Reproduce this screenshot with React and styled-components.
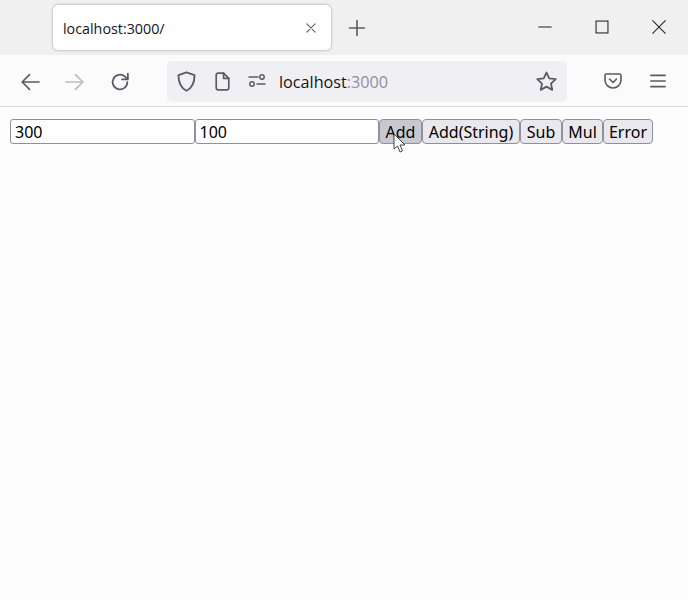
import React from 'react';
import styled, { createGlobalStyle } from 'styled-components';

const GlobalStyle = createGlobalStyle`
  html, body {
    margin: 0;
    padding: 0;
    height: 100%;
    background: #fdfdfd;
    overflow: hidden;
  }
  #root {
    height: 100%;
  }
`;

const Page = styled.div`
  width: 688px;
  height: 600px;
  display: flex;
  flex-direction: column;
  font-family: 'Open Sans', 'Noto Sans', sans-serif;
`;

const TitleBar = styled.div`
  height: 55px;
  background: #f0f0f0;
  display: flex;
  align-items: flex-start;
  padding: 5px 0 0 53px;
  box-sizing: border-box;
  flex-shrink: 0;
`;

const Tab = styled.div`
  width: 278px;
  height: 45px;
  background: #fff;
  border-radius: 5px;
  box-shadow: 0 0 3px rgba(0, 0, 0, 0.35);
  display: flex;
  align-items: center;
  justify-content: space-between;
  padding: 0 13px 0 10px;
  box-sizing: border-box;
  font-size: 14.3px;
  color: #15141a;
`;

const TabTitle = styled.span`
  padding-top: 2px;
`;

const NewTab = styled.div`
  margin: 13px 0 0 16px;
  display: flex;
`;

const WindowControls = styled.div`
  margin-left: auto;
  display: flex;
  align-items: center;
  gap: 43px;
  height: 44px;
  padding-right: 22px;
`;

const NavBar = styled.div`
  height: 52px;
  box-sizing: border-box;
  background: #fbfbfb;
  border-bottom: 1px solid #dcdcdc;
  display: flex;
  align-items: center;
  padding: 1px 22px 0 19px;
  flex-shrink: 0;
`;

const NavButtons = styled.div`
  display: flex;
  align-items: center;
  gap: 24.5px;
`;

const UrlBar = styled.div`
  width: 400px;
  height: 41px;
  margin-left: 36px;
  background: #f0f0f4;
  border-radius: 5px;
  display: flex;
  align-items: center;
  padding: 0 9px 0 8px;
  box-sizing: border-box;
  font-size: 16.2px;
`;

const UrlIcons = styled.div`
  display: flex;
  align-items: center;
  gap: 14px;
  margin-right: 12px;
`;

const UrlText = styled.span`
  padding-top: 2px;
`;

const Host = styled.span`
  color: #15141a;
`;

const Port = styled.span`
  color: #8f8f9d;
`;

const StarSlot = styled.div`
  margin-left: auto;
  display: flex;
`;

const NavRight = styled.div`
  margin-left: auto;
  display: flex;
  align-items: center;
  gap: 27px;
`;

const Content = styled.div`
  flex: 1;
  background: #fdfdfd;
  padding: 12px 10px;
  position: relative;
`;

const Form = styled.div`
  display: flex;
  align-items: stretch;
  height: 25px;
`;

const Field = styled.input`
  width: 184.5px;
  height: 25px;
  box-sizing: border-box;
  border: 1px solid #8f8f9d;
  border-radius: 3px;
  background: #fff;
  padding: 0 4px;
  font: 16px 'Noto Sans', 'Liberation Sans', sans-serif;
  color: #000;
  outline: none;
`;

const Button = styled.button`
  width: ${props => props.$width}px;
  height: 25px;
  box-sizing: border-box;
  border: 1px solid #8f8f9d;
  border-radius: 4px;
  background: ${props => (props.$hover ? '#c8c8d0' : '#e9e9ed')};
  padding: 0;
  font: 16px 'Noto Sans', 'Liberation Sans', sans-serif;
  color: #000;
`;

const Cursor = styled.svg`
  position: absolute;
  left: 393px;
  top: 26px;
`;

const Icon = ({ size = 20, color = '#5b5b66', width = 1.6, children }) => (
  <svg
    width={size}
    height={size}
    viewBox="0 0 20 20"
    fill="none"
    stroke={color}
    strokeWidth={width}
    strokeLinecap="round"
    strokeLinejoin="round"
  >
    {children}
  </svg>
);

const App = () => {
  return (
    <Page>
      <GlobalStyle />
      <TitleBar>
        <Tab>
          <TabTitle>localhost:3000/</TabTitle>
          <Icon size={14} width={1.5}>
            <path d="M4 4l12 12M16 4L4 16" />
          </Icon>
        </Tab>
        <NewTab>
          <Icon size={20}>
            <path d="M10 2.5v15M2.5 10h15" />
          </Icon>
        </NewTab>
        <WindowControls>
          <Icon size={14} color="#222" width={1.5}>
            <path d="M1 10h18" />
          </Icon>
          <Icon size={14} color="#222" width={1.5}>
            <rect x="1.5" y="1.5" width="17" height="17" strokeLinejoin="miter" />
          </Icon>
          <Icon size={14} color="#222" width={1.5}>
            <path d="M1 1l18 18M19 1L1 19" />
          </Icon>
        </WindowControls>
      </TitleBar>
      <NavBar>
        <NavButtons>
          <Icon size={21}>
            <path d="M19 10.5H3M10 3.5l-7 7 7 7" />
          </Icon>
          <Icon size={21} color="#bcbcc2">
            <path d="M1 10.5h16M10 3.5l7 7-7 7" />
          </Icon>
          <Icon size={21} width={1.7}>
            <path d="M16.5 10.5a7 7 0 1 1-2.2-5.1L16.5 7.5" />
            <path d="M17 2.5v5.5h-5.5" />
          </Icon>
        </NavButtons>
        <UrlBar>
          <UrlIcons>
            <Icon size={23}>
              <path d="M10 2l7 2.5c0 7-2 11-7 13.5C5 15.5 3 11.5 3 4.5z" />
            </Icon>
            <Icon size={21}>
              <path d="M4 4a2 2 0 0 1 2-2h5l5 5v9a2 2 0 0 1-2 2H6a2 2 0 0 1-2-2z" />
              <path d="M11 2v5h5" />
            </Icon>
            <Icon size={20} width={1.5}>
              <path d="M2 6h9M10 13h8" />
              <circle cx="15" cy="6" r="2.2" />
              <circle cx="5" cy="13" r="2.2" />
            </Icon>
          </UrlIcons>
          <UrlText>
            <Host>localhost</Host>
            <Port>:3000</Port>
          </UrlText>
          <StarSlot>
            <Icon size={23}>
              <path d="M10 2.2l2.4 5.1 5.6.7-4.1 3.8 1.1 5.5-5-2.8-5 2.8 1.1-5.5L2 8l5.6-.7z" />
            </Icon>
          </StarSlot>
        </UrlBar>
        <NavRight>
          <Icon size={20}>
            <path d="M3.5 3h13A1.5 1.5 0 0 1 18 4.5V9a8 8 0 0 1-16 0V4.5A1.5 1.5 0 0 1 3.5 3z" />
            <path d="M6.5 8l3.5 3.5L13.5 8" />
          </Icon>
          <Icon size={16} width={2}>
            <path d="M1 3h18M1 10h18M1 17h18" />
          </Icon>
        </NavRight>
      </NavBar>
      <Content>
        <Form>
          <Field defaultValue="300" />
          <Field defaultValue="100" />
          <Button $hover $width={43}>Add</Button>
          <Button $width={98}>Add(String)</Button>
          <Button $width={42}>Sub</Button>
          <Button $width={41}>Mul</Button>
          <Button $width={50}>Error</Button>
        </Form>
        <Cursor width="14" height="21" viewBox="0 0 14 21">
          <path d="M1 1v15l3.5-3 2.5 6 2.5-1-2.500-6H12z" fill="#fff" stroke="#444" strokeWidth="1" strokeLinejoin="round" />
        </Cursor>
      </Content>
    </Page>
  );
};

export default App;
